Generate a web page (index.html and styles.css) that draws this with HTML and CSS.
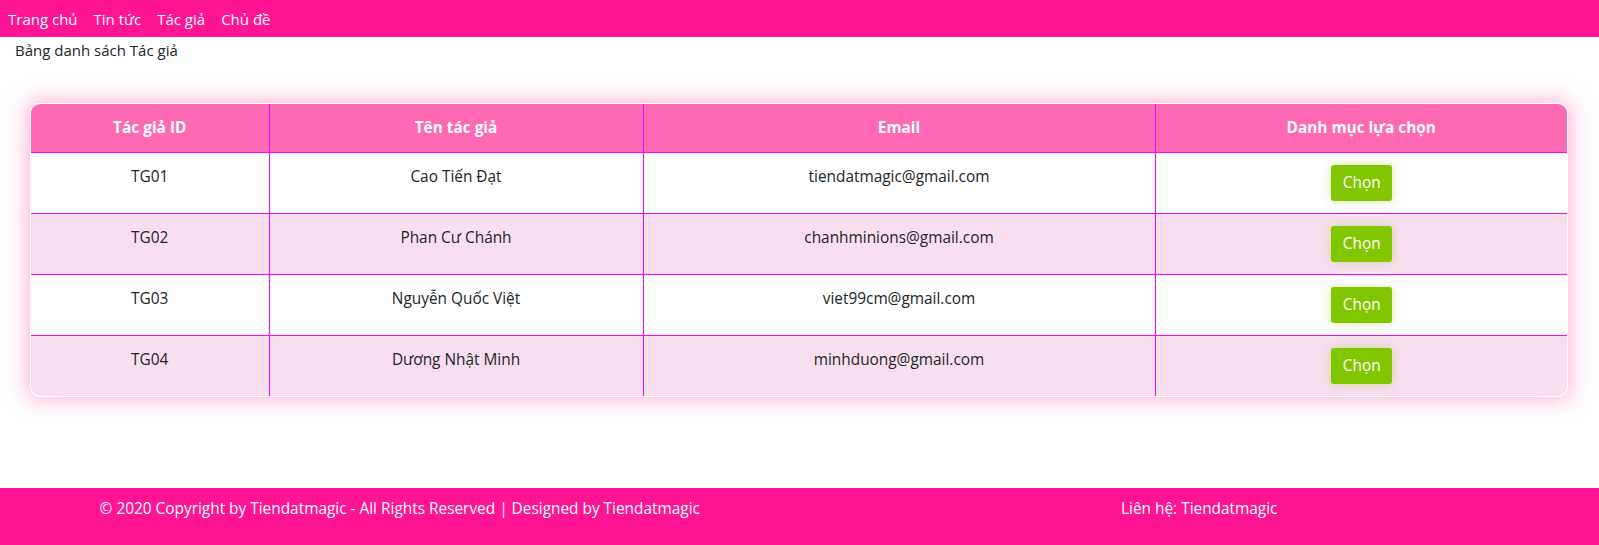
FILE: index.html
```html
<!DOCTYPE html>
<html lang="vi">
<head>
<meta charset="utf-8">
<title>Tác giả</title>
<link rel="stylesheet" href="styles.css">
</head>
<body>
<nav class="topnav">
  <a href="#">Trang chủ</a>
  <a href="#">Tin tức</a>
  <a href="#">Tác giả</a>
  <a href="#">Chủ đề</a>
</nav>
<main class="content">
  <p class="caption">Bảng danh sách Tác giả</p>
  <div class="card">
    <table class="authors">
      <colgroup>
        <col class="c1"><col class="c2"><col class="c3"><col class="c4">
      </colgroup>
      <thead>
        <tr><th>Tác giả ID</th><th>Tên tác giả</th><th>Email</th><th>Danh mục lựa chọn</th></tr>
      </thead>
      <tbody>
        <tr><td>TG01</td><td>Cao Tiến Đạt</td><td>tiendatmagic@gmail.com</td><td><button class="pick">Chọn</button></td></tr>
        <tr><td>TG02</td><td>Phan Cư Chánh</td><td>chanhminions@gmail.com</td><td><button class="pick">Chọn</button></td></tr>
        <tr><td>TG03</td><td>Nguyễn Quốc Việt</td><td>viet99cm@gmail.com</td><td><button class="pick">Chọn</button></td></tr>
        <tr><td>TG04</td><td>Dương Nhật Minh</td><td>minhduong@gmail.com</td><td><button class="pick">Chọn</button></td></tr>
      </tbody>
    </table>
  </div>
</main>
<footer class="footer">
  <div class="fcol">© 2020 Copyright by Tiendatmagic - All Rights Reserved | Designed by Tiendatmagic</div>
  <div class="fcol">Liên hệ: Tiendatmagic</div>
</footer>
</body>
</html>
```
FILE: styles.css
```css
* { box-sizing: border-box; }
html, body { margin: 0; padding: 0; }
body {
  font-family: "Open Sans", "Noto Sans", sans-serif;
  font-size: 15.4px;
  line-height: 24px;
  color: #212529;
  background: #fff;
  width: 1599px;
  height: 545px;
  display: flex;
  flex-direction: column;
}
.topnav {
  background: #ff1493;
  height: 37px;
  display: flex;
  align-items: center;
  gap: 16px;
  padding: 0 8px;
}
.topnav a {
  color: #fff;
  text-decoration: none;
  font-size: 15px;
}
.content { flex: 1; }
.caption {
  margin: 1px 0 0 15px;
  line-height: 24px;
  font-size: 15px;
}
.card {
  margin: 41px 31px 0 30px;
  border: 1px solid #fff;
  border-radius: 10px;
  overflow: hidden;
  box-shadow: 0 0 20px 3px rgba(255, 105, 180, 0.5);
}
.authors {
  width: 100%;
  table-layout: fixed;
  border-collapse: collapse;
  text-align: center;
}
.c1 { width: 238px; }
.c2 { width: 374px; }
.c3 { width: 512px; }
.authors th, .authors td {
  padding: 12px;
  vertical-align: top;
  border-left: 1px solid #ff00ff;
}
.authors th:first-child, .authors td:first-child { border-left: none; }
.authors th {
  background: #ff69b4;
  color: #fff;
  font-weight: 700;
  border-bottom: 1px solid #ff00ff;
}
.authors tbody tr + tr td { border-top: 1px solid #ff00ff; }
.authors tbody tr:nth-child(even) td { background: #f8dff0; }
.pick {
  font-family: inherit;
  font-size: 15.4px;
  line-height: 24px;
  color: #fff;
  background: #82c600;
  border: none;
  border-radius: 3px;
  padding: 6px 12px;
  height: 36px;
  width: 61px;
  box-shadow: 0 0 10px rgba(130, 198, 0, 0.35);
}
.footer {
  background: #ff1493;
  height: 57px;
  display: grid;
  grid-template-columns: 1fr 1fr;
  color: #fff;
  padding-top: 9px;
}
.fcol { text-align: center; }
```
